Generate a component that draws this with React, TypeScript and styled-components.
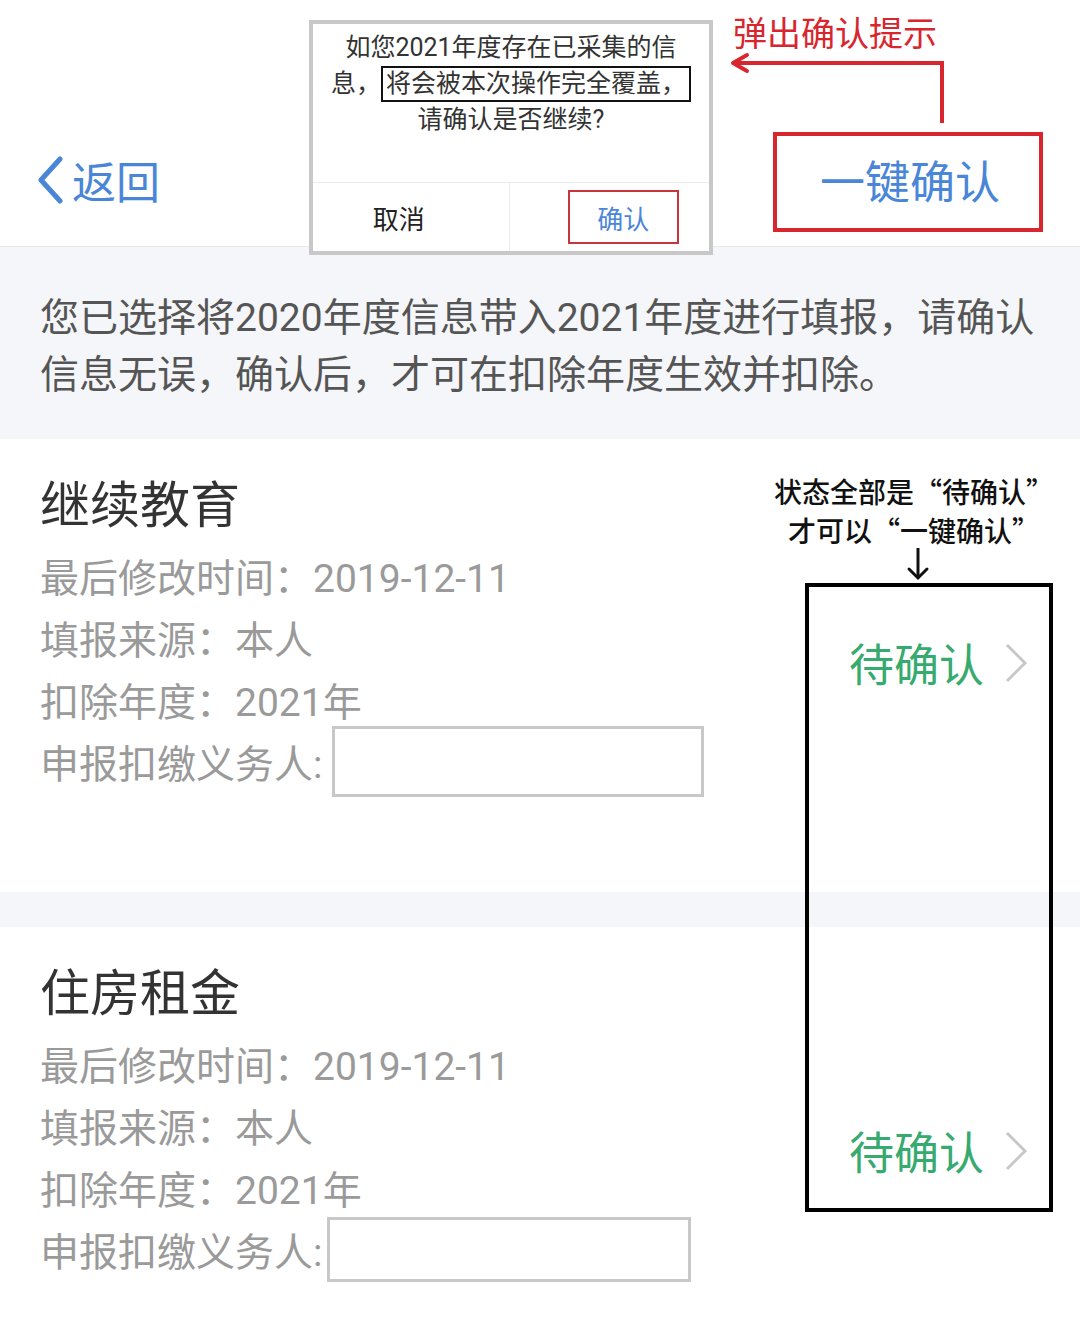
import React from 'react';

import styled, { createGlobalStyle } from 'styled-components';

const BLUE = '#4a86d8';
const RED = '#d8262e';
const GREEN = '#36aa6f';

const GlobalStyle = createGlobalStyle`
  html,
  body {
    margin: 0;
    padding: 0;
    background: #ffffff;
  }

  body {
    font-family: Roboto, 'Noto Sans CJK SC', sans-serif;
  }
`;

const Page = styled.div`
  position: relative;
  width: 1080px;
  height: 1340px;
  overflow: hidden;
  background: #ffffff;
`;

const Header = styled.header`
  height: 247px;
  box-sizing: border-box;
  display: flex;
  align-items: flex-end;
  justify-content: space-between;
  padding: 0 37px 14px 36px;
  border-bottom: 1px solid #e6e8eb;
`;

const BackLink = styled.div`
  height: 100px;
  display: flex;
  align-items: center;
  gap: 8px;
  padding-bottom: 4px;
  box-sizing: border-box;
  font-size: 44px;
  color: ${BLUE};
`;

const ConfirmAllButton = styled.div`
  width: 270px;
  height: 100px;
  box-sizing: border-box;
  display: flex;
  align-items: center;
  justify-content: center;
  padding: 0 0 5px 4px;
  border: 4px solid ${RED};
  font-size: 45px;
  color: ${BLUE};
`;

const Notice = styled.section`
  background: #f4f6f9;
  padding: 43px 30px 35px 40px;
  font-size: 39px;
  line-height: 57px;
  color: #555555;
  white-space: nowrap;
`;

const Gap = styled.div`
  height: 35px;
  background: #f4f6f9;
`;

const Card = styled.section`
  height: 453px;
  box-sizing: border-box;
  display: flex;
  align-items: center;
  justify-content: space-between;
  padding: 0 52px 0 40px;
  background: #ffffff;
`;

const CardBody = styled.div`
  align-self: flex-start;
  padding-top: 29px;
`;

const CardTitle = styled.h2`
  margin: 0;
  font-size: 50px;
  font-weight: 400;
  line-height: 76px;
  color: #333333;
`;

const InfoRow = styled.div`
  height: 62px;
  display: flex;
  align-items: center;
  font-size: 39px;
  color: #9a9a9a;
  white-space: nowrap;
`;

const BlankField = styled.div<{ $width: number; $height: number; $gap: number }>`
  flex: none;
  width: ${(p) => p.$width}px;
  height: ${(p) => p.$height}px;
  box-sizing: border-box;
  margin-left: ${(p) => p.$gap}px;
  border: 3px solid #c8c8c8;
  background: #ffffff;
`;

const Status = styled.div`
  display: flex;
  align-items: center;
  gap: 20px;
  padding-bottom: 6px;
  font-size: 45px;
  color: ${GREEN};
`;

const Dialog = styled.div`
  position: absolute;
  left: 309px;
  top: 20px;
  width: 404px;
  height: 235px;
  box-sizing: border-box;
  display: flex;
  flex-direction: column;
  border: 4px solid #c8c8c8;
  background: #ffffff;
`;

const DialogMessage = styled.div`
  height: 159px;
  box-sizing: border-box;
  padding-top: 6px;
  border-bottom: 1px solid #ececec;
  font-size: 25px;
  line-height: 36px;
  text-align: center;
  color: #333333;
  white-space: nowrap;
`;

const Marked = styled.span`
  display: inline-block;
  padding: 0 3px;
  line-height: 32px;
  border: 2px solid #111111;
`;

const DialogActions = styled.div`
  flex: 1;
  display: flex;
`;

const DialogButton = styled.div<{ $primary?: boolean }>`
  flex: 1;
  display: flex;
  align-items: center;
  justify-content: center;
  font-size: 26px;
  color: ${(p) => (p.$primary ? BLUE : '#222222')};
  padding: ${(p) => (p.$primary ? '0 0 0 28px' : '0 24px 0 0')};

  & + & {
    border-left: 1px solid #ececec;
  }
`;

const RedFrame = styled.span`
  width: 111px;
  height: 54px;
  box-sizing: border-box;
  display: flex;
  align-items: center;
  justify-content: center;
  border: 2px solid #c8343a;
`;

const PopupNote = styled.div`
  position: absolute;
  left: 733px;
  top: 13px;
  font-size: 34px;
  line-height: 42px;
  color: ${RED};
`;

const NoteArrow = styled.svg<{ $left: number; $top: number }>`
  position: absolute;
  left: ${(p) => p.$left}px;
  top: ${(p) => p.$top}px;
`;

const StatusNote = styled.div`
  position: absolute;
  left: 768px;
  top: 472px;
  width: 292px;
  font-family: 'Noto Sans CJK SC', sans-serif;
  font-size: 28px;
  font-weight: 500;
  line-height: 39px;
  text-align: center;
  color: #111111;
  white-space: nowrap;
`;

const StatusFrame = styled.div`
  position: absolute;
  left: 805px;
  top: 583px;
  width: 248px;
  height: 629px;
  box-sizing: border-box;
  border: 4px solid #000000;
`;

function BackChevron() {
  return (
    <svg width="28" height="48" viewBox="0 0 28 48">
      <polyline
        points="24,3 5,24 24,45"
        fill="none"
        stroke={BLUE}
        strokeWidth="5"
        strokeLinecap="round"
        strokeLinejoin="round"
      />
    </svg>
  );
}

function RightChevron() {
  return (
    <svg width="24" height="42" viewBox="0 0 24 42">
      <polyline points="3,3 21,21 3,39" fill="none" stroke="#c8c8c8" strokeWidth="3" />
    </svg>
  );
}

interface DeductionItem {
  title: string;
  updated: string;
  source: string;
  year: string;
  field: { width: number; height: number; gap: number };
}

const items: DeductionItem[] = [
  {
    title: '继续教育',
    updated: '2019-12-11',
    source: '本人',
    year: '2021年',
    field: { width: 372, height: 71, gap: 10 },
  },
  {
    title: '住房租金',
    updated: '2019-12-11',
    source: '本人',
    year: '2021年',
    field: { width: 364, height: 65, gap: 5 },
  },
];

function DeductionCard({ item }: { item: DeductionItem }) {
  return (
    <Card>
      <CardBody>
        <CardTitle>{item.title}</CardTitle>
        <InfoRow>最后修改时间：{item.updated}</InfoRow>
        <InfoRow>填报来源：{item.source}</InfoRow>
        <InfoRow>扣除年度：{item.year}</InfoRow>
        <InfoRow>
          申报扣缴义务人:
          <BlankField $width={item.field.width} $height={item.field.height} $gap={item.field.gap} />
        </InfoRow>
      </CardBody>
      <Status>
        待确认
        <RightChevron />
      </Status>
    </Card>
  );
}

export default function App() {
  return (
    <Page>
      <GlobalStyle />
      <Header>
        <BackLink>
          <BackChevron />
          返回
        </BackLink>
        <ConfirmAllButton>一键确认</ConfirmAllButton>
      </Header>

      <Notice>
        您已选择将2020年度信息带入2021年度进行填报，请确认
        <br />
        信息无误，确认后，才可在扣除年度生效并扣除。
      </Notice>

      <DeductionCard item={items[0]} />
      <Gap />
      <DeductionCard item={items[1]} />

      {/* annotations drawn over the screenshot */}
      <Dialog>
        <DialogMessage>
          如您2021年度存在已采集的信
          <br />
          息，<Marked>将会被本次操作完全覆盖，</Marked>
          <br />
          请确认是否继续?
        </DialogMessage>
        <DialogActions>
          <DialogButton>取消</DialogButton>
          <DialogButton $primary>
            <RedFrame>确认</RedFrame>
          </DialogButton>
        </DialogActions>
      </Dialog>

      <PopupNote>弹出确认提示</PopupNote>
      <NoteArrow $left={726} $top={52} width="222" height="74" viewBox="0 0 222 74">
        <polyline points="8,11 216,11 216,71" fill="none" stroke={RED} strokeWidth="4" />
        <polyline
          points="21,3 7,11 21,19"
          fill="none"
          stroke={RED}
          strokeWidth="4"
          strokeLinecap="round"
          strokeLinejoin="round"
        />
      </NoteArrow>

      <StatusNote>
        状态全部是“待确认”
        <br />
        才可以“一键确认”
      </StatusNote>
      <NoteArrow $left={905} $top={546} width="26" height="36" viewBox="0 0 26 36">
        <line x1="13" y1="2" x2="13" y2="32" stroke="#111111" strokeWidth="3" />
        <polyline
          points="4,23 13,32 22,23"
          fill="none"
          stroke="#111111"
          strokeWidth="3"
          strokeLinecap="round"
        />
      </NoteArrow>
      <StatusFrame />
    </Page>
  );
}
